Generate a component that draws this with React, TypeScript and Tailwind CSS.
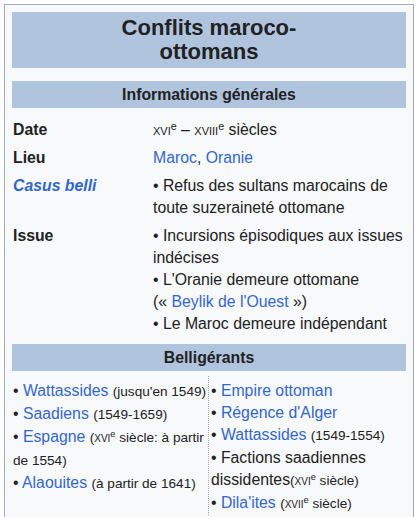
import React from "react";

const A = ({ children }: { children: React.ReactNode }) => (
  <span className="text-[#3366cc]">{children}</span>
);

const Siecle = ({ n }: { n: string }) => (
  <>
    <span className="[font-variant:small-caps]">{n}</span>
    <span className="text-[0.68em] leading-none relative top-[-0.5em]">e</span>
  </>
);

const Small = ({ children }: { children: React.ReactNode }) => (
  <span className="text-[13.6px]">{children}</span>
);

export default function App() {
  return (
    <div className="p-1 bg-white min-h-screen" style={{ fontFamily: '"Liberation Sans", Arial, sans-serif' }}>
      <div className="w-[410px] border border-[#a2a9b1] bg-[#f8f9fa] px-[7px] pt-[7px] pb-4 text-[15.8px] leading-[22px] text-[#202122]">
        <div className="bg-[#b0c4de] h-[56px] flex items-center justify-center text-center font-bold text-[22px] leading-[24px] px-20">
          Conflits maroco-ottomans
        </div>
        <div className="mt-[13px] bg-[#b0c4de] h-[27px] flex items-center justify-center font-bold">
          Informations générales
        </div>
        <div className="mt-[11px] flex flex-col gap-[6px] pl-[1px]">
          <div className="flex">
            <div className="w-[140px] font-bold">Date</div>
            <div className="flex-1">
              <Siecle n="xvi" /> – <Siecle n="xviii" /> siècles
            </div>
          </div>
          <div className="flex">
            <div className="w-[140px] font-bold">Lieu</div>
            <div className="flex-1">
              <A>Maroc</A>, <A>Oranie</A>
            </div>
          </div>
          <div className="flex">
            <div className="w-[140px] font-bold italic text-[#3366cc]">Casus belli</div>
            <div className="flex-1">• Refus des sultans marocains de toute suzeraineté ottomane</div>
          </div>
          <div className="flex">
            <div className="w-[140px] font-bold">Issue</div>
            <div className="flex-1">
              <div>• Incursions épisodiques aux issues indécises</div>
              <div>
                • L'Oranie demeure ottomane (&laquo;&nbsp;<A>Beylik de l'Ouest</A>&nbsp;&raquo;)
              </div>
              <div>• Le Maroc demeure indépendant</div>
            </div>
          </div>
        </div>
        <div className="mt-[9px] bg-[#b0c4de] h-[27px] flex items-center justify-center font-bold">
          Belligérants
        </div>
        <div className="flex mt-[5px]">
          <div className="w-[196px] pl-[1px] pt-[4px]">
            <div>• <A>Wattassides</A> <Small>(jusqu'en 1549)</Small></div>
            <div>• <A>Saadiens</A> <Small>(1549-1659)</Small></div>
            <div>
              • <A>Espagne</A> <Small>(<Siecle n="xvi" /> siècle: à partir de 1554)</Small>
            </div>
            <div>• <A>Alaouites</A> <Small>(à partir de 1641)</Small></div>
          </div>
          <div className="flex-1 border-l border-dotted border-[#a2a9b1] pl-[2px] pt-[4px]">
            <div>• <A>Empire ottoman</A></div>
            <div>• <A>Régence d'Alger</A></div>
            <div>• <A>Wattassides</A> <Small>(1549-1554)</Small></div>
            <div>
              • Factions saadiennes dissidentes<Small>(<Siecle n="xvi" /> siècle)</Small>
            </div>
            <div>• <A>Dila'ites</A> <Small>(<Siecle n="xvii" /> siècle)</Small></div>
          </div>
        </div>
      </div>
    </div>
  );
}
